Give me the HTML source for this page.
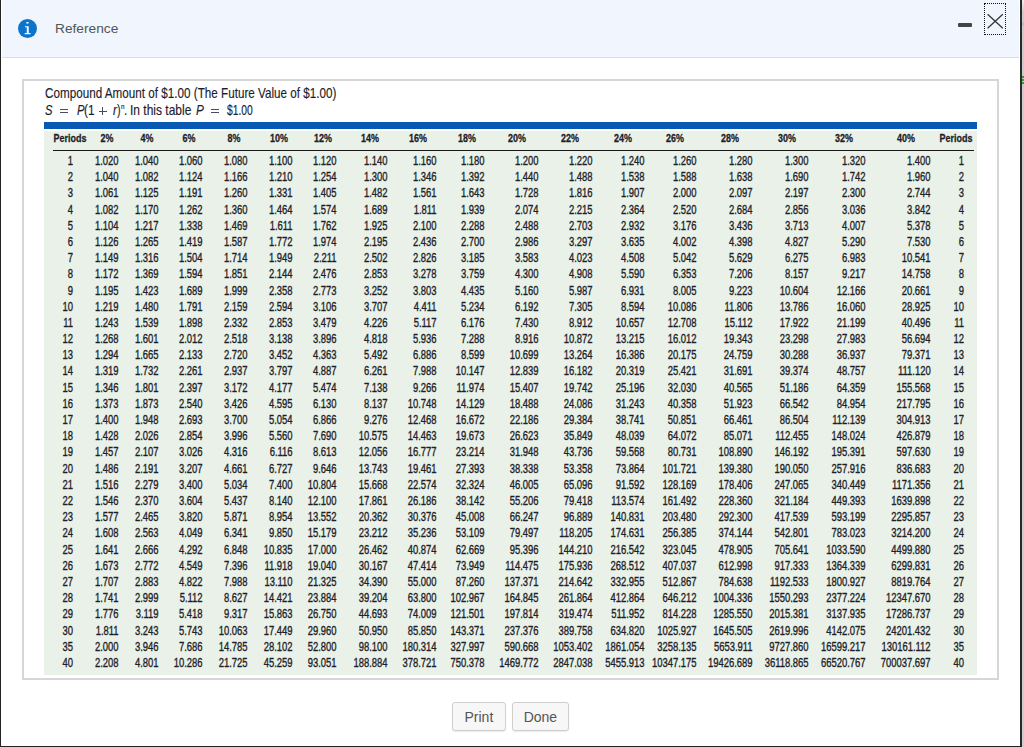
<!DOCTYPE html>
<html><head><meta charset="utf-8">
<style>
html,body{margin:0;padding:0;}
body{width:1024px;height:747px;overflow:hidden;position:relative;background:#fff;font-family:"Liberation Sans",sans-serif;}
.hdr{position:absolute;left:2px;top:0;width:1017px;height:57px;background:#f0f5fe;border-bottom:1px solid #c8e0f6;}
.lb{position:absolute;left:0;top:0;width:1px;height:747px;background:#222;}
.rb{position:absolute;left:1020px;top:0;width:2px;height:747px;background:#2a2a2a;}
.rg{position:absolute;left:1022px;top:0;width:2px;height:747px;background:linear-gradient(to bottom,#eeeeee 0px,#cccccc 12px,#cccccc 22px,#b9bac2 23px,#b9bac2 25px,#cccccc 26px);}
.gm{position:absolute;left:1022px;width:2px;background:#3a9a3a;}
.bb{position:absolute;left:0;top:746px;width:1022px;height:1px;background:#222;}
.icon{position:absolute;left:18.3px;top:18.7px;width:19.1px;height:19.1px;border-radius:50%;background:#0b74cd;}
.ref{position:absolute;left:54.8px;top:20.0px;font-size:13.2px;line-height:18px;color:#555;transform:scaleX(1.04);transform-origin:0 0;}
.minus{position:absolute;left:958.4px;top:22.7px;width:13.2px;height:4.4px;background:#444;border-radius:1px;}
.xbox{position:absolute;left:984px;top:3px;width:22px;height:31.8px;border:1px dotted #111;box-sizing:border-box;}
.panel{position:absolute;left:22.3px;top:79.2px;width:977px;height:600.8px;border:2px solid #d6d6d6;box-sizing:border-box;}
.title{position:absolute;left:44.8px;top:85.25px;font-size:14.4px;line-height:16px;color:#1c1c2c;white-space:nowrap;transform:scaleX(0.812);transform-origin:0 0;-webkit-text-stroke:0.15px #1c1c2c;}
.ln{position:absolute;background:#4a4a60;}
.fp{position:absolute;font-size:14.4px;line-height:16px;color:#1c1c2c;white-space:nowrap;transform:scaleX(0.88);transform-origin:0 0;-webkit-text-stroke:0.15px #1c1c2c;}
.bar{position:absolute;left:44px;top:122.4px;width:933px;height:6.9px;background:#0759b3;}
.tbg{position:absolute;left:44px;top:130.9px;width:933px;height:544.4px;background:#e9f1e8;}
.uline{position:absolute;left:53px;top:149.8px;width:921px;height:1.3px;background:#1a1a1a;}
.c{position:absolute;font-size:12.6px;line-height:12.6px;white-space:nowrap;color:#1e1e28;-webkit-text-stroke:0.35px #1e1e28;transform:scaleX(0.75);transform-origin:100% 0;}
.h{position:absolute;width:100px;text-align:center;font-weight:bold;font-size:11.2px;line-height:11.2px;white-space:nowrap;color:#1e1e28;-webkit-text-stroke:0.3px #1e1e28;transform:scaleX(0.8);transform-origin:50% 0;}
.btn{position:absolute;top:702.4px;height:28.4px;box-sizing:border-box;border:1px solid #cfcfcf;border-radius:3px;background:#f7f7f7;color:#555;font-size:14px;line-height:28.2px;text-align:center;box-shadow:0 1px 1px rgba(0,0,0,0.08);}
</style></head><body>
<div class="hdr"></div>
<div class="icon"><svg width="19.1" height="19.1" viewBox="0 0 19.1 19.1" style="position:absolute;left:0;top:0"><rect x="8.3" y="3.0" width="2.4" height="1.6" rx="0.6" fill="#fff"/><path d="M7.0 7.2 H10.7 V14.0 H12.5 V15.3 H6.7 V14.0 H8.8 V8.3 H7.0 Z" fill="#fff"/></svg></div>
<div class="ref">Reference</div>
<div class="minus"></div>
<div class="xbox"><svg width="21" height="30" viewBox="0 0 21 30" style="position:absolute;left:0;top:0"><path d="M2.6 10.2 L17.8 24.2 M17.8 10.2 L2.6 24.2" stroke="#333" stroke-width="1.25" fill="none"/></svg></div>
<div class="panel"></div>
<div class="title" id="title">Compound Amount of $1.00 (The Future Value of $1.00)</div>
<div class="fp" style="left:45.20px;top:101.50px;transform:scaleX(0.7817)"><i>S</i></div>
<div class="fp" style="left:76.50px;top:101.50px;transform:scaleX(0.7817)"><i>P</i></div>
<div class="fp" style="left:84.00px;top:101.50px;transform:scaleX(0.8189)">(</div>
<div class="fp" style="left:88.00px;top:101.50px;transform:scaleX(0.8189)">1</div>
<div class="fp" style="left:112.80px;top:101.50px;transform:scaleX(0.8189)"><i>r</i></div>
<div class="fp" style="left:117.20px;top:101.50px;transform:scaleX(0.7445)">)</div>
<div class="fp" style="left:123.60px;top:101.50px;transform:scaleX(0.8189)">.</div>
<div class="fp" style="left:130.20px;top:101.50px;transform:scaleX(0.8329)">In this table</div>
<div class="fp" style="left:195.80px;top:101.50px;transform:scaleX(0.8189)"><i>P</i></div>
<div class="fp" style="left:227.00px;top:101.50px;transform:scaleX(0.7166)">$1.00</div>
<div class="fp" style="left:120.5px;top:104.10px;font-size:7px;line-height:6px;transform:scaleX(0.9)">n</div>
<div class="ln" style="left:60.2px;top:109px;width:7.8px;height:1px"></div>
<div class="ln" style="left:60.2px;top:112px;width:7.8px;height:1px"></div>
<div class="ln" style="left:211.1px;top:109px;width:7.8px;height:1px"></div>
<div class="ln" style="left:211.1px;top:112px;width:7.8px;height:1px"></div>
<div class="ln" style="left:98.8px;top:110.8px;width:8px;height:1px"></div>
<div class="ln" style="left:102.4px;top:107.2px;width:1px;height:7.6px"></div>
<div class="bar"></div>
<div class="tbg"></div>
<div class="uline"></div>
<div class="h" style="left:19.50px;top:133.43px">Periods</div>
<div class="h" style="left:56.60px;top:133.43px">2%</div>
<div class="h" style="left:96.90px;top:133.43px">4%</div>
<div class="h" style="left:138.80px;top:133.43px">6%</div>
<div class="h" style="left:184.00px;top:133.43px">8%</div>
<div class="h" style="left:228.70px;top:133.43px">10%</div>
<div class="h" style="left:273.20px;top:133.43px">12%</div>
<div class="h" style="left:319.90px;top:133.43px">14%</div>
<div class="h" style="left:368.20px;top:133.43px">16%</div>
<div class="h" style="left:417.00px;top:133.43px">18%</div>
<div class="h" style="left:466.90px;top:133.43px">20%</div>
<div class="h" style="left:520.00px;top:133.43px">22%</div>
<div class="h" style="left:572.60px;top:133.43px">24%</div>
<div class="h" style="left:625.30px;top:133.43px">26%</div>
<div class="h" style="left:680.40px;top:133.43px">28%</div>
<div class="h" style="left:736.70px;top:133.43px">30%</div>
<div class="h" style="left:793.80px;top:133.43px">32%</div>
<div class="h" style="left:856.00px;top:133.43px">40%</div>
<div class="h" style="left:906.30px;top:133.43px">Periods</div>
<div class="c" style="right:951.32px;top:155.01px">1</div>
<div class="c" style="right:905.62px;top:155.01px">1.020</div>
<div class="c" style="right:865.32px;top:155.01px">1.040</div>
<div class="c" style="right:821.52px;top:155.01px">1.060</div>
<div class="c" style="right:776.62px;top:155.01px">1.080</div>
<div class="c" style="right:731.62px;top:155.01px">1.100</div>
<div class="c" style="right:687.52px;top:155.01px">1.120</div>
<div class="c" style="right:636.02px;top:155.01px">1.140</div>
<div class="c" style="right:587.42px;top:155.01px">1.160</div>
<div class="c" style="right:539.12px;top:155.01px">1.180</div>
<div class="c" style="right:485.32px;top:155.01px">1.200</div>
<div class="c" style="right:431.92px;top:155.01px">1.220</div>
<div class="c" style="right:379.32px;top:155.01px">1.240</div>
<div class="c" style="right:327.52px;top:155.01px">1.260</div>
<div class="c" style="right:271.62px;top:155.01px">1.280</div>
<div class="c" style="right:215.02px;top:155.01px">1.300</div>
<div class="c" style="right:158.32px;top:155.01px">1.320</div>
<div class="c" style="right:93.72px;top:155.01px">1.400</div>
<div class="c" style="right:59.72px;top:155.01px">1</div>
<div class="c" style="right:951.32px;top:171.20px">2</div>
<div class="c" style="right:905.62px;top:171.20px">1.040</div>
<div class="c" style="right:865.32px;top:171.20px">1.082</div>
<div class="c" style="right:821.52px;top:171.20px">1.124</div>
<div class="c" style="right:776.62px;top:171.20px">1.166</div>
<div class="c" style="right:731.62px;top:171.20px">1.210</div>
<div class="c" style="right:687.52px;top:171.20px">1.254</div>
<div class="c" style="right:636.02px;top:171.20px">1.300</div>
<div class="c" style="right:587.42px;top:171.20px">1.346</div>
<div class="c" style="right:539.12px;top:171.20px">1.392</div>
<div class="c" style="right:485.32px;top:171.20px">1.440</div>
<div class="c" style="right:431.92px;top:171.20px">1.488</div>
<div class="c" style="right:379.32px;top:171.20px">1.538</div>
<div class="c" style="right:327.52px;top:171.20px">1.588</div>
<div class="c" style="right:271.62px;top:171.20px">1.638</div>
<div class="c" style="right:215.02px;top:171.20px">1.690</div>
<div class="c" style="right:158.32px;top:171.20px">1.742</div>
<div class="c" style="right:93.72px;top:171.20px">1.960</div>
<div class="c" style="right:59.72px;top:171.20px">2</div>
<div class="c" style="right:951.32px;top:187.39px">3</div>
<div class="c" style="right:905.62px;top:187.39px">1.061</div>
<div class="c" style="right:865.32px;top:187.39px">1.125</div>
<div class="c" style="right:821.52px;top:187.39px">1.191</div>
<div class="c" style="right:776.62px;top:187.39px">1.260</div>
<div class="c" style="right:731.62px;top:187.39px">1.331</div>
<div class="c" style="right:687.52px;top:187.39px">1.405</div>
<div class="c" style="right:636.02px;top:187.39px">1.482</div>
<div class="c" style="right:587.42px;top:187.39px">1.561</div>
<div class="c" style="right:539.12px;top:187.39px">1.643</div>
<div class="c" style="right:485.32px;top:187.39px">1.728</div>
<div class="c" style="right:431.92px;top:187.39px">1.816</div>
<div class="c" style="right:379.32px;top:187.39px">1.907</div>
<div class="c" style="right:327.52px;top:187.39px">2.000</div>
<div class="c" style="right:271.62px;top:187.39px">2.097</div>
<div class="c" style="right:215.02px;top:187.39px">2.197</div>
<div class="c" style="right:158.32px;top:187.39px">2.300</div>
<div class="c" style="right:93.72px;top:187.39px">2.744</div>
<div class="c" style="right:59.72px;top:187.39px">3</div>
<div class="c" style="right:951.32px;top:203.58px">4</div>
<div class="c" style="right:905.62px;top:203.58px">1.082</div>
<div class="c" style="right:865.32px;top:203.58px">1.170</div>
<div class="c" style="right:821.52px;top:203.58px">1.262</div>
<div class="c" style="right:776.62px;top:203.58px">1.360</div>
<div class="c" style="right:731.62px;top:203.58px">1.464</div>
<div class="c" style="right:687.52px;top:203.58px">1.574</div>
<div class="c" style="right:636.02px;top:203.58px">1.689</div>
<div class="c" style="right:587.42px;top:203.58px">1.811</div>
<div class="c" style="right:539.12px;top:203.58px">1.939</div>
<div class="c" style="right:485.32px;top:203.58px">2.074</div>
<div class="c" style="right:431.92px;top:203.58px">2.215</div>
<div class="c" style="right:379.32px;top:203.58px">2.364</div>
<div class="c" style="right:327.52px;top:203.58px">2.520</div>
<div class="c" style="right:271.62px;top:203.58px">2.684</div>
<div class="c" style="right:215.02px;top:203.58px">2.856</div>
<div class="c" style="right:158.32px;top:203.58px">3.036</div>
<div class="c" style="right:93.72px;top:203.58px">3.842</div>
<div class="c" style="right:59.72px;top:203.58px">4</div>
<div class="c" style="right:951.32px;top:219.77px">5</div>
<div class="c" style="right:905.62px;top:219.77px">1.104</div>
<div class="c" style="right:865.32px;top:219.77px">1.217</div>
<div class="c" style="right:821.52px;top:219.77px">1.338</div>
<div class="c" style="right:776.62px;top:219.77px">1.469</div>
<div class="c" style="right:731.62px;top:219.77px">1.611</div>
<div class="c" style="right:687.52px;top:219.77px">1.762</div>
<div class="c" style="right:636.02px;top:219.77px">1.925</div>
<div class="c" style="right:587.42px;top:219.77px">2.100</div>
<div class="c" style="right:539.12px;top:219.77px">2.288</div>
<div class="c" style="right:485.32px;top:219.77px">2.488</div>
<div class="c" style="right:431.92px;top:219.77px">2.703</div>
<div class="c" style="right:379.32px;top:219.77px">2.932</div>
<div class="c" style="right:327.52px;top:219.77px">3.176</div>
<div class="c" style="right:271.62px;top:219.77px">3.436</div>
<div class="c" style="right:215.02px;top:219.77px">3.713</div>
<div class="c" style="right:158.32px;top:219.77px">4.007</div>
<div class="c" style="right:93.72px;top:219.77px">5.378</div>
<div class="c" style="right:59.72px;top:219.77px">5</div>
<div class="c" style="right:951.32px;top:235.96px">6</div>
<div class="c" style="right:905.62px;top:235.96px">1.126</div>
<div class="c" style="right:865.32px;top:235.96px">1.265</div>
<div class="c" style="right:821.52px;top:235.96px">1.419</div>
<div class="c" style="right:776.62px;top:235.96px">1.587</div>
<div class="c" style="right:731.62px;top:235.96px">1.772</div>
<div class="c" style="right:687.52px;top:235.96px">1.974</div>
<div class="c" style="right:636.02px;top:235.96px">2.195</div>
<div class="c" style="right:587.42px;top:235.96px">2.436</div>
<div class="c" style="right:539.12px;top:235.96px">2.700</div>
<div class="c" style="right:485.32px;top:235.96px">2.986</div>
<div class="c" style="right:431.92px;top:235.96px">3.297</div>
<div class="c" style="right:379.32px;top:235.96px">3.635</div>
<div class="c" style="right:327.52px;top:235.96px">4.002</div>
<div class="c" style="right:271.62px;top:235.96px">4.398</div>
<div class="c" style="right:215.02px;top:235.96px">4.827</div>
<div class="c" style="right:158.32px;top:235.96px">5.290</div>
<div class="c" style="right:93.72px;top:235.96px">7.530</div>
<div class="c" style="right:59.72px;top:235.96px">6</div>
<div class="c" style="right:951.32px;top:252.15px">7</div>
<div class="c" style="right:905.62px;top:252.15px">1.149</div>
<div class="c" style="right:865.32px;top:252.15px">1.316</div>
<div class="c" style="right:821.52px;top:252.15px">1.504</div>
<div class="c" style="right:776.62px;top:252.15px">1.714</div>
<div class="c" style="right:731.62px;top:252.15px">1.949</div>
<div class="c" style="right:687.52px;top:252.15px">2.211</div>
<div class="c" style="right:636.02px;top:252.15px">2.502</div>
<div class="c" style="right:587.42px;top:252.15px">2.826</div>
<div class="c" style="right:539.12px;top:252.15px">3.185</div>
<div class="c" style="right:485.32px;top:252.15px">3.583</div>
<div class="c" style="right:431.92px;top:252.15px">4.023</div>
<div class="c" style="right:379.32px;top:252.15px">4.508</div>
<div class="c" style="right:327.52px;top:252.15px">5.042</div>
<div class="c" style="right:271.62px;top:252.15px">5.629</div>
<div class="c" style="right:215.02px;top:252.15px">6.275</div>
<div class="c" style="right:158.32px;top:252.15px">6.983</div>
<div class="c" style="right:93.72px;top:252.15px">10.541</div>
<div class="c" style="right:59.72px;top:252.15px">7</div>
<div class="c" style="right:951.32px;top:268.34px">8</div>
<div class="c" style="right:905.62px;top:268.34px">1.172</div>
<div class="c" style="right:865.32px;top:268.34px">1.369</div>
<div class="c" style="right:821.52px;top:268.34px">1.594</div>
<div class="c" style="right:776.62px;top:268.34px">1.851</div>
<div class="c" style="right:731.62px;top:268.34px">2.144</div>
<div class="c" style="right:687.52px;top:268.34px">2.476</div>
<div class="c" style="right:636.02px;top:268.34px">2.853</div>
<div class="c" style="right:587.42px;top:268.34px">3.278</div>
<div class="c" style="right:539.12px;top:268.34px">3.759</div>
<div class="c" style="right:485.32px;top:268.34px">4.300</div>
<div class="c" style="right:431.92px;top:268.34px">4.908</div>
<div class="c" style="right:379.32px;top:268.34px">5.590</div>
<div class="c" style="right:327.52px;top:268.34px">6.353</div>
<div class="c" style="right:271.62px;top:268.34px">7.206</div>
<div class="c" style="right:215.02px;top:268.34px">8.157</div>
<div class="c" style="right:158.32px;top:268.34px">9.217</div>
<div class="c" style="right:93.72px;top:268.34px">14.758</div>
<div class="c" style="right:59.72px;top:268.34px">8</div>
<div class="c" style="right:951.32px;top:284.53px">9</div>
<div class="c" style="right:905.62px;top:284.53px">1.195</div>
<div class="c" style="right:865.32px;top:284.53px">1.423</div>
<div class="c" style="right:821.52px;top:284.53px">1.689</div>
<div class="c" style="right:776.62px;top:284.53px">1.999</div>
<div class="c" style="right:731.62px;top:284.53px">2.358</div>
<div class="c" style="right:687.52px;top:284.53px">2.773</div>
<div class="c" style="right:636.02px;top:284.53px">3.252</div>
<div class="c" style="right:587.42px;top:284.53px">3.803</div>
<div class="c" style="right:539.12px;top:284.53px">4.435</div>
<div class="c" style="right:485.32px;top:284.53px">5.160</div>
<div class="c" style="right:431.92px;top:284.53px">5.987</div>
<div class="c" style="right:379.32px;top:284.53px">6.931</div>
<div class="c" style="right:327.52px;top:284.53px">8.005</div>
<div class="c" style="right:271.62px;top:284.53px">9.223</div>
<div class="c" style="right:215.02px;top:284.53px">10.604</div>
<div class="c" style="right:158.32px;top:284.53px">12.166</div>
<div class="c" style="right:93.72px;top:284.53px">20.661</div>
<div class="c" style="right:59.72px;top:284.53px">9</div>
<div class="c" style="right:951.32px;top:300.72px">10</div>
<div class="c" style="right:905.62px;top:300.72px">1.219</div>
<div class="c" style="right:865.32px;top:300.72px">1.480</div>
<div class="c" style="right:821.52px;top:300.72px">1.791</div>
<div class="c" style="right:776.62px;top:300.72px">2.159</div>
<div class="c" style="right:731.62px;top:300.72px">2.594</div>
<div class="c" style="right:687.52px;top:300.72px">3.106</div>
<div class="c" style="right:636.02px;top:300.72px">3.707</div>
<div class="c" style="right:587.42px;top:300.72px">4.411</div>
<div class="c" style="right:539.12px;top:300.72px">5.234</div>
<div class="c" style="right:485.32px;top:300.72px">6.192</div>
<div class="c" style="right:431.92px;top:300.72px">7.305</div>
<div class="c" style="right:379.32px;top:300.72px">8.594</div>
<div class="c" style="right:327.52px;top:300.72px">10.086</div>
<div class="c" style="right:271.62px;top:300.72px">11.806</div>
<div class="c" style="right:215.02px;top:300.72px">13.786</div>
<div class="c" style="right:158.32px;top:300.72px">16.060</div>
<div class="c" style="right:93.72px;top:300.72px">28.925</div>
<div class="c" style="right:59.72px;top:300.72px">10</div>
<div class="c" style="right:951.32px;top:316.91px">11</div>
<div class="c" style="right:905.62px;top:316.91px">1.243</div>
<div class="c" style="right:865.32px;top:316.91px">1.539</div>
<div class="c" style="right:821.52px;top:316.91px">1.898</div>
<div class="c" style="right:776.62px;top:316.91px">2.332</div>
<div class="c" style="right:731.62px;top:316.91px">2.853</div>
<div class="c" style="right:687.52px;top:316.91px">3.479</div>
<div class="c" style="right:636.02px;top:316.91px">4.226</div>
<div class="c" style="right:587.42px;top:316.91px">5.117</div>
<div class="c" style="right:539.12px;top:316.91px">6.176</div>
<div class="c" style="right:485.32px;top:316.91px">7.430</div>
<div class="c" style="right:431.92px;top:316.91px">8.912</div>
<div class="c" style="right:379.32px;top:316.91px">10.657</div>
<div class="c" style="right:327.52px;top:316.91px">12.708</div>
<div class="c" style="right:271.62px;top:316.91px">15.112</div>
<div class="c" style="right:215.02px;top:316.91px">17.922</div>
<div class="c" style="right:158.32px;top:316.91px">21.199</div>
<div class="c" style="right:93.72px;top:316.91px">40.496</div>
<div class="c" style="right:59.72px;top:316.91px">11</div>
<div class="c" style="right:951.32px;top:333.10px">12</div>
<div class="c" style="right:905.62px;top:333.10px">1.268</div>
<div class="c" style="right:865.32px;top:333.10px">1.601</div>
<div class="c" style="right:821.52px;top:333.10px">2.012</div>
<div class="c" style="right:776.62px;top:333.10px">2.518</div>
<div class="c" style="right:731.62px;top:333.10px">3.138</div>
<div class="c" style="right:687.52px;top:333.10px">3.896</div>
<div class="c" style="right:636.02px;top:333.10px">4.818</div>
<div class="c" style="right:587.42px;top:333.10px">5.936</div>
<div class="c" style="right:539.12px;top:333.10px">7.288</div>
<div class="c" style="right:485.32px;top:333.10px">8.916</div>
<div class="c" style="right:431.92px;top:333.10px">10.872</div>
<div class="c" style="right:379.32px;top:333.10px">13.215</div>
<div class="c" style="right:327.52px;top:333.10px">16.012</div>
<div class="c" style="right:271.62px;top:333.10px">19.343</div>
<div class="c" style="right:215.02px;top:333.10px">23.298</div>
<div class="c" style="right:158.32px;top:333.10px">27.983</div>
<div class="c" style="right:93.72px;top:333.10px">56.694</div>
<div class="c" style="right:59.72px;top:333.10px">12</div>
<div class="c" style="right:951.32px;top:349.29px">13</div>
<div class="c" style="right:905.62px;top:349.29px">1.294</div>
<div class="c" style="right:865.32px;top:349.29px">1.665</div>
<div class="c" style="right:821.52px;top:349.29px">2.133</div>
<div class="c" style="right:776.62px;top:349.29px">2.720</div>
<div class="c" style="right:731.62px;top:349.29px">3.452</div>
<div class="c" style="right:687.52px;top:349.29px">4.363</div>
<div class="c" style="right:636.02px;top:349.29px">5.492</div>
<div class="c" style="right:587.42px;top:349.29px">6.886</div>
<div class="c" style="right:539.12px;top:349.29px">8.599</div>
<div class="c" style="right:485.32px;top:349.29px">10.699</div>
<div class="c" style="right:431.92px;top:349.29px">13.264</div>
<div class="c" style="right:379.32px;top:349.29px">16.386</div>
<div class="c" style="right:327.52px;top:349.29px">20.175</div>
<div class="c" style="right:271.62px;top:349.29px">24.759</div>
<div class="c" style="right:215.02px;top:349.29px">30.288</div>
<div class="c" style="right:158.32px;top:349.29px">36.937</div>
<div class="c" style="right:93.72px;top:349.29px">79.371</div>
<div class="c" style="right:59.72px;top:349.29px">13</div>
<div class="c" style="right:951.32px;top:365.48px">14</div>
<div class="c" style="right:905.62px;top:365.48px">1.319</div>
<div class="c" style="right:865.32px;top:365.48px">1.732</div>
<div class="c" style="right:821.52px;top:365.48px">2.261</div>
<div class="c" style="right:776.62px;top:365.48px">2.937</div>
<div class="c" style="right:731.62px;top:365.48px">3.797</div>
<div class="c" style="right:687.52px;top:365.48px">4.887</div>
<div class="c" style="right:636.02px;top:365.48px">6.261</div>
<div class="c" style="right:587.42px;top:365.48px">7.988</div>
<div class="c" style="right:539.12px;top:365.48px">10.147</div>
<div class="c" style="right:485.32px;top:365.48px">12.839</div>
<div class="c" style="right:431.92px;top:365.48px">16.182</div>
<div class="c" style="right:379.32px;top:365.48px">20.319</div>
<div class="c" style="right:327.52px;top:365.48px">25.421</div>
<div class="c" style="right:271.62px;top:365.48px">31.691</div>
<div class="c" style="right:215.02px;top:365.48px">39.374</div>
<div class="c" style="right:158.32px;top:365.48px">48.757</div>
<div class="c" style="right:93.72px;top:365.48px">111.120</div>
<div class="c" style="right:59.72px;top:365.48px">14</div>
<div class="c" style="right:951.32px;top:381.67px">15</div>
<div class="c" style="right:905.62px;top:381.67px">1.346</div>
<div class="c" style="right:865.32px;top:381.67px">1.801</div>
<div class="c" style="right:821.52px;top:381.67px">2.397</div>
<div class="c" style="right:776.62px;top:381.67px">3.172</div>
<div class="c" style="right:731.62px;top:381.67px">4.177</div>
<div class="c" style="right:687.52px;top:381.67px">5.474</div>
<div class="c" style="right:636.02px;top:381.67px">7.138</div>
<div class="c" style="right:587.42px;top:381.67px">9.266</div>
<div class="c" style="right:539.12px;top:381.67px">11.974</div>
<div class="c" style="right:485.32px;top:381.67px">15.407</div>
<div class="c" style="right:431.92px;top:381.67px">19.742</div>
<div class="c" style="right:379.32px;top:381.67px">25.196</div>
<div class="c" style="right:327.52px;top:381.67px">32.030</div>
<div class="c" style="right:271.62px;top:381.67px">40.565</div>
<div class="c" style="right:215.02px;top:381.67px">51.186</div>
<div class="c" style="right:158.32px;top:381.67px">64.359</div>
<div class="c" style="right:93.72px;top:381.67px">155.568</div>
<div class="c" style="right:59.72px;top:381.67px">15</div>
<div class="c" style="right:951.32px;top:397.86px">16</div>
<div class="c" style="right:905.62px;top:397.86px">1.373</div>
<div class="c" style="right:865.32px;top:397.86px">1.873</div>
<div class="c" style="right:821.52px;top:397.86px">2.540</div>
<div class="c" style="right:776.62px;top:397.86px">3.426</div>
<div class="c" style="right:731.62px;top:397.86px">4.595</div>
<div class="c" style="right:687.52px;top:397.86px">6.130</div>
<div class="c" style="right:636.02px;top:397.86px">8.137</div>
<div class="c" style="right:587.42px;top:397.86px">10.748</div>
<div class="c" style="right:539.12px;top:397.86px">14.129</div>
<div class="c" style="right:485.32px;top:397.86px">18.488</div>
<div class="c" style="right:431.92px;top:397.86px">24.086</div>
<div class="c" style="right:379.32px;top:397.86px">31.243</div>
<div class="c" style="right:327.52px;top:397.86px">40.358</div>
<div class="c" style="right:271.62px;top:397.86px">51.923</div>
<div class="c" style="right:215.02px;top:397.86px">66.542</div>
<div class="c" style="right:158.32px;top:397.86px">84.954</div>
<div class="c" style="right:93.72px;top:397.86px">217.795</div>
<div class="c" style="right:59.72px;top:397.86px">16</div>
<div class="c" style="right:951.32px;top:414.05px">17</div>
<div class="c" style="right:905.62px;top:414.05px">1.400</div>
<div class="c" style="right:865.32px;top:414.05px">1.948</div>
<div class="c" style="right:821.52px;top:414.05px">2.693</div>
<div class="c" style="right:776.62px;top:414.05px">3.700</div>
<div class="c" style="right:731.62px;top:414.05px">5.054</div>
<div class="c" style="right:687.52px;top:414.05px">6.866</div>
<div class="c" style="right:636.02px;top:414.05px">9.276</div>
<div class="c" style="right:587.42px;top:414.05px">12.468</div>
<div class="c" style="right:539.12px;top:414.05px">16.672</div>
<div class="c" style="right:485.32px;top:414.05px">22.186</div>
<div class="c" style="right:431.92px;top:414.05px">29.384</div>
<div class="c" style="right:379.32px;top:414.05px">38.741</div>
<div class="c" style="right:327.52px;top:414.05px">50.851</div>
<div class="c" style="right:271.62px;top:414.05px">66.461</div>
<div class="c" style="right:215.02px;top:414.05px">86.504</div>
<div class="c" style="right:158.32px;top:414.05px">112.139</div>
<div class="c" style="right:93.72px;top:414.05px">304.913</div>
<div class="c" style="right:59.72px;top:414.05px">17</div>
<div class="c" style="right:951.32px;top:430.24px">18</div>
<div class="c" style="right:905.62px;top:430.24px">1.428</div>
<div class="c" style="right:865.32px;top:430.24px">2.026</div>
<div class="c" style="right:821.52px;top:430.24px">2.854</div>
<div class="c" style="right:776.62px;top:430.24px">3.996</div>
<div class="c" style="right:731.62px;top:430.24px">5.560</div>
<div class="c" style="right:687.52px;top:430.24px">7.690</div>
<div class="c" style="right:636.02px;top:430.24px">10.575</div>
<div class="c" style="right:587.42px;top:430.24px">14.463</div>
<div class="c" style="right:539.12px;top:430.24px">19.673</div>
<div class="c" style="right:485.32px;top:430.24px">26.623</div>
<div class="c" style="right:431.92px;top:430.24px">35.849</div>
<div class="c" style="right:379.32px;top:430.24px">48.039</div>
<div class="c" style="right:327.52px;top:430.24px">64.072</div>
<div class="c" style="right:271.62px;top:430.24px">85.071</div>
<div class="c" style="right:215.02px;top:430.24px">112.455</div>
<div class="c" style="right:158.32px;top:430.24px">148.024</div>
<div class="c" style="right:93.72px;top:430.24px">426.879</div>
<div class="c" style="right:59.72px;top:430.24px">18</div>
<div class="c" style="right:951.32px;top:446.43px">19</div>
<div class="c" style="right:905.62px;top:446.43px">1.457</div>
<div class="c" style="right:865.32px;top:446.43px">2.107</div>
<div class="c" style="right:821.52px;top:446.43px">3.026</div>
<div class="c" style="right:776.62px;top:446.43px">4.316</div>
<div class="c" style="right:731.62px;top:446.43px">6.116</div>
<div class="c" style="right:687.52px;top:446.43px">8.613</div>
<div class="c" style="right:636.02px;top:446.43px">12.056</div>
<div class="c" style="right:587.42px;top:446.43px">16.777</div>
<div class="c" style="right:539.12px;top:446.43px">23.214</div>
<div class="c" style="right:485.32px;top:446.43px">31.948</div>
<div class="c" style="right:431.92px;top:446.43px">43.736</div>
<div class="c" style="right:379.32px;top:446.43px">59.568</div>
<div class="c" style="right:327.52px;top:446.43px">80.731</div>
<div class="c" style="right:271.62px;top:446.43px">108.890</div>
<div class="c" style="right:215.02px;top:446.43px">146.192</div>
<div class="c" style="right:158.32px;top:446.43px">195.391</div>
<div class="c" style="right:93.72px;top:446.43px">597.630</div>
<div class="c" style="right:59.72px;top:446.43px">19</div>
<div class="c" style="right:951.32px;top:462.62px">20</div>
<div class="c" style="right:905.62px;top:462.62px">1.486</div>
<div class="c" style="right:865.32px;top:462.62px">2.191</div>
<div class="c" style="right:821.52px;top:462.62px">3.207</div>
<div class="c" style="right:776.62px;top:462.62px">4.661</div>
<div class="c" style="right:731.62px;top:462.62px">6.727</div>
<div class="c" style="right:687.52px;top:462.62px">9.646</div>
<div class="c" style="right:636.02px;top:462.62px">13.743</div>
<div class="c" style="right:587.42px;top:462.62px">19.461</div>
<div class="c" style="right:539.12px;top:462.62px">27.393</div>
<div class="c" style="right:485.32px;top:462.62px">38.338</div>
<div class="c" style="right:431.92px;top:462.62px">53.358</div>
<div class="c" style="right:379.32px;top:462.62px">73.864</div>
<div class="c" style="right:327.52px;top:462.62px">101.721</div>
<div class="c" style="right:271.62px;top:462.62px">139.380</div>
<div class="c" style="right:215.02px;top:462.62px">190.050</div>
<div class="c" style="right:158.32px;top:462.62px">257.916</div>
<div class="c" style="right:93.72px;top:462.62px">836.683</div>
<div class="c" style="right:59.72px;top:462.62px">20</div>
<div class="c" style="right:951.32px;top:478.81px">21</div>
<div class="c" style="right:905.62px;top:478.81px">1.516</div>
<div class="c" style="right:865.32px;top:478.81px">2.279</div>
<div class="c" style="right:821.52px;top:478.81px">3.400</div>
<div class="c" style="right:776.62px;top:478.81px">5.034</div>
<div class="c" style="right:731.62px;top:478.81px">7.400</div>
<div class="c" style="right:687.52px;top:478.81px">10.804</div>
<div class="c" style="right:636.02px;top:478.81px">15.668</div>
<div class="c" style="right:587.42px;top:478.81px">22.574</div>
<div class="c" style="right:539.12px;top:478.81px">32.324</div>
<div class="c" style="right:485.32px;top:478.81px">46.005</div>
<div class="c" style="right:431.92px;top:478.81px">65.096</div>
<div class="c" style="right:379.32px;top:478.81px">91.592</div>
<div class="c" style="right:327.52px;top:478.81px">128.169</div>
<div class="c" style="right:271.62px;top:478.81px">178.406</div>
<div class="c" style="right:215.02px;top:478.81px">247.065</div>
<div class="c" style="right:158.32px;top:478.81px">340.449</div>
<div class="c" style="right:93.72px;top:478.81px">1171.356</div>
<div class="c" style="right:59.72px;top:478.81px">21</div>
<div class="c" style="right:951.32px;top:495.00px">22</div>
<div class="c" style="right:905.62px;top:495.00px">1.546</div>
<div class="c" style="right:865.32px;top:495.00px">2.370</div>
<div class="c" style="right:821.52px;top:495.00px">3.604</div>
<div class="c" style="right:776.62px;top:495.00px">5.437</div>
<div class="c" style="right:731.62px;top:495.00px">8.140</div>
<div class="c" style="right:687.52px;top:495.00px">12.100</div>
<div class="c" style="right:636.02px;top:495.00px">17.861</div>
<div class="c" style="right:587.42px;top:495.00px">26.186</div>
<div class="c" style="right:539.12px;top:495.00px">38.142</div>
<div class="c" style="right:485.32px;top:495.00px">55.206</div>
<div class="c" style="right:431.92px;top:495.00px">79.418</div>
<div class="c" style="right:379.32px;top:495.00px">113.574</div>
<div class="c" style="right:327.52px;top:495.00px">161.492</div>
<div class="c" style="right:271.62px;top:495.00px">228.360</div>
<div class="c" style="right:215.02px;top:495.00px">321.184</div>
<div class="c" style="right:158.32px;top:495.00px">449.393</div>
<div class="c" style="right:93.72px;top:495.00px">1639.898</div>
<div class="c" style="right:59.72px;top:495.00px">22</div>
<div class="c" style="right:951.32px;top:511.19px">23</div>
<div class="c" style="right:905.62px;top:511.19px">1.577</div>
<div class="c" style="right:865.32px;top:511.19px">2.465</div>
<div class="c" style="right:821.52px;top:511.19px">3.820</div>
<div class="c" style="right:776.62px;top:511.19px">5.871</div>
<div class="c" style="right:731.62px;top:511.19px">8.954</div>
<div class="c" style="right:687.52px;top:511.19px">13.552</div>
<div class="c" style="right:636.02px;top:511.19px">20.362</div>
<div class="c" style="right:587.42px;top:511.19px">30.376</div>
<div class="c" style="right:539.12px;top:511.19px">45.008</div>
<div class="c" style="right:485.32px;top:511.19px">66.247</div>
<div class="c" style="right:431.92px;top:511.19px">96.889</div>
<div class="c" style="right:379.32px;top:511.19px">140.831</div>
<div class="c" style="right:327.52px;top:511.19px">203.480</div>
<div class="c" style="right:271.62px;top:511.19px">292.300</div>
<div class="c" style="right:215.02px;top:511.19px">417.539</div>
<div class="c" style="right:158.32px;top:511.19px">593.199</div>
<div class="c" style="right:93.72px;top:511.19px">2295.857</div>
<div class="c" style="right:59.72px;top:511.19px">23</div>
<div class="c" style="right:951.32px;top:527.38px">24</div>
<div class="c" style="right:905.62px;top:527.38px">1.608</div>
<div class="c" style="right:865.32px;top:527.38px">2.563</div>
<div class="c" style="right:821.52px;top:527.38px">4.049</div>
<div class="c" style="right:776.62px;top:527.38px">6.341</div>
<div class="c" style="right:731.62px;top:527.38px">9.850</div>
<div class="c" style="right:687.52px;top:527.38px">15.179</div>
<div class="c" style="right:636.02px;top:527.38px">23.212</div>
<div class="c" style="right:587.42px;top:527.38px">35.236</div>
<div class="c" style="right:539.12px;top:527.38px">53.109</div>
<div class="c" style="right:485.32px;top:527.38px">79.497</div>
<div class="c" style="right:431.92px;top:527.38px">118.205</div>
<div class="c" style="right:379.32px;top:527.38px">174.631</div>
<div class="c" style="right:327.52px;top:527.38px">256.385</div>
<div class="c" style="right:271.62px;top:527.38px">374.144</div>
<div class="c" style="right:215.02px;top:527.38px">542.801</div>
<div class="c" style="right:158.32px;top:527.38px">783.023</div>
<div class="c" style="right:93.72px;top:527.38px">3214.200</div>
<div class="c" style="right:59.72px;top:527.38px">24</div>
<div class="c" style="right:951.32px;top:543.57px">25</div>
<div class="c" style="right:905.62px;top:543.57px">1.641</div>
<div class="c" style="right:865.32px;top:543.57px">2.666</div>
<div class="c" style="right:821.52px;top:543.57px">4.292</div>
<div class="c" style="right:776.62px;top:543.57px">6.848</div>
<div class="c" style="right:731.62px;top:543.57px">10.835</div>
<div class="c" style="right:687.52px;top:543.57px">17.000</div>
<div class="c" style="right:636.02px;top:543.57px">26.462</div>
<div class="c" style="right:587.42px;top:543.57px">40.874</div>
<div class="c" style="right:539.12px;top:543.57px">62.669</div>
<div class="c" style="right:485.32px;top:543.57px">95.396</div>
<div class="c" style="right:431.92px;top:543.57px">144.210</div>
<div class="c" style="right:379.32px;top:543.57px">216.542</div>
<div class="c" style="right:327.52px;top:543.57px">323.045</div>
<div class="c" style="right:271.62px;top:543.57px">478.905</div>
<div class="c" style="right:215.02px;top:543.57px">705.641</div>
<div class="c" style="right:158.32px;top:543.57px">1033.590</div>
<div class="c" style="right:93.72px;top:543.57px">4499.880</div>
<div class="c" style="right:59.72px;top:543.57px">25</div>
<div class="c" style="right:951.32px;top:559.76px">26</div>
<div class="c" style="right:905.62px;top:559.76px">1.673</div>
<div class="c" style="right:865.32px;top:559.76px">2.772</div>
<div class="c" style="right:821.52px;top:559.76px">4.549</div>
<div class="c" style="right:776.62px;top:559.76px">7.396</div>
<div class="c" style="right:731.62px;top:559.76px">11.918</div>
<div class="c" style="right:687.52px;top:559.76px">19.040</div>
<div class="c" style="right:636.02px;top:559.76px">30.167</div>
<div class="c" style="right:587.42px;top:559.76px">47.414</div>
<div class="c" style="right:539.12px;top:559.76px">73.949</div>
<div class="c" style="right:485.32px;top:559.76px">114.475</div>
<div class="c" style="right:431.92px;top:559.76px">175.936</div>
<div class="c" style="right:379.32px;top:559.76px">268.512</div>
<div class="c" style="right:327.52px;top:559.76px">407.037</div>
<div class="c" style="right:271.62px;top:559.76px">612.998</div>
<div class="c" style="right:215.02px;top:559.76px">917.333</div>
<div class="c" style="right:158.32px;top:559.76px">1364.339</div>
<div class="c" style="right:93.72px;top:559.76px">6299.831</div>
<div class="c" style="right:59.72px;top:559.76px">26</div>
<div class="c" style="right:951.32px;top:575.95px">27</div>
<div class="c" style="right:905.62px;top:575.95px">1.707</div>
<div class="c" style="right:865.32px;top:575.95px">2.883</div>
<div class="c" style="right:821.52px;top:575.95px">4.822</div>
<div class="c" style="right:776.62px;top:575.95px">7.988</div>
<div class="c" style="right:731.62px;top:575.95px">13.110</div>
<div class="c" style="right:687.52px;top:575.95px">21.325</div>
<div class="c" style="right:636.02px;top:575.95px">34.390</div>
<div class="c" style="right:587.42px;top:575.95px">55.000</div>
<div class="c" style="right:539.12px;top:575.95px">87.260</div>
<div class="c" style="right:485.32px;top:575.95px">137.371</div>
<div class="c" style="right:431.92px;top:575.95px">214.642</div>
<div class="c" style="right:379.32px;top:575.95px">332.955</div>
<div class="c" style="right:327.52px;top:575.95px">512.867</div>
<div class="c" style="right:271.62px;top:575.95px">784.638</div>
<div class="c" style="right:215.02px;top:575.95px">1192.533</div>
<div class="c" style="right:158.32px;top:575.95px">1800.927</div>
<div class="c" style="right:93.72px;top:575.95px">8819.764</div>
<div class="c" style="right:59.72px;top:575.95px">27</div>
<div class="c" style="right:951.32px;top:592.14px">28</div>
<div class="c" style="right:905.62px;top:592.14px">1.741</div>
<div class="c" style="right:865.32px;top:592.14px">2.999</div>
<div class="c" style="right:821.52px;top:592.14px">5.112</div>
<div class="c" style="right:776.62px;top:592.14px">8.627</div>
<div class="c" style="right:731.62px;top:592.14px">14.421</div>
<div class="c" style="right:687.52px;top:592.14px">23.884</div>
<div class="c" style="right:636.02px;top:592.14px">39.204</div>
<div class="c" style="right:587.42px;top:592.14px">63.800</div>
<div class="c" style="right:539.12px;top:592.14px">102.967</div>
<div class="c" style="right:485.32px;top:592.14px">164.845</div>
<div class="c" style="right:431.92px;top:592.14px">261.864</div>
<div class="c" style="right:379.32px;top:592.14px">412.864</div>
<div class="c" style="right:327.52px;top:592.14px">646.212</div>
<div class="c" style="right:271.62px;top:592.14px">1004.336</div>
<div class="c" style="right:215.02px;top:592.14px">1550.293</div>
<div class="c" style="right:158.32px;top:592.14px">2377.224</div>
<div class="c" style="right:93.72px;top:592.14px">12347.670</div>
<div class="c" style="right:59.72px;top:592.14px">28</div>
<div class="c" style="right:951.32px;top:608.33px">29</div>
<div class="c" style="right:905.62px;top:608.33px">1.776</div>
<div class="c" style="right:865.32px;top:608.33px">3.119</div>
<div class="c" style="right:821.52px;top:608.33px">5.418</div>
<div class="c" style="right:776.62px;top:608.33px">9.317</div>
<div class="c" style="right:731.62px;top:608.33px">15.863</div>
<div class="c" style="right:687.52px;top:608.33px">26.750</div>
<div class="c" style="right:636.02px;top:608.33px">44.693</div>
<div class="c" style="right:587.42px;top:608.33px">74.009</div>
<div class="c" style="right:539.12px;top:608.33px">121.501</div>
<div class="c" style="right:485.32px;top:608.33px">197.814</div>
<div class="c" style="right:431.92px;top:608.33px">319.474</div>
<div class="c" style="right:379.32px;top:608.33px">511.952</div>
<div class="c" style="right:327.52px;top:608.33px">814.228</div>
<div class="c" style="right:271.62px;top:608.33px">1285.550</div>
<div class="c" style="right:215.02px;top:608.33px">2015.381</div>
<div class="c" style="right:158.32px;top:608.33px">3137.935</div>
<div class="c" style="right:93.72px;top:608.33px">17286.737</div>
<div class="c" style="right:59.72px;top:608.33px">29</div>
<div class="c" style="right:951.32px;top:624.52px">30</div>
<div class="c" style="right:905.62px;top:624.52px">1.811</div>
<div class="c" style="right:865.32px;top:624.52px">3.243</div>
<div class="c" style="right:821.52px;top:624.52px">5.743</div>
<div class="c" style="right:776.62px;top:624.52px">10.063</div>
<div class="c" style="right:731.62px;top:624.52px">17.449</div>
<div class="c" style="right:687.52px;top:624.52px">29.960</div>
<div class="c" style="right:636.02px;top:624.52px">50.950</div>
<div class="c" style="right:587.42px;top:624.52px">85.850</div>
<div class="c" style="right:539.12px;top:624.52px">143.371</div>
<div class="c" style="right:485.32px;top:624.52px">237.376</div>
<div class="c" style="right:431.92px;top:624.52px">389.758</div>
<div class="c" style="right:379.32px;top:624.52px">634.820</div>
<div class="c" style="right:327.52px;top:624.52px">1025.927</div>
<div class="c" style="right:271.62px;top:624.52px">1645.505</div>
<div class="c" style="right:215.02px;top:624.52px">2619.996</div>
<div class="c" style="right:158.32px;top:624.52px">4142.075</div>
<div class="c" style="right:93.72px;top:624.52px">24201.432</div>
<div class="c" style="right:59.72px;top:624.52px">30</div>
<div class="c" style="right:951.32px;top:640.71px">35</div>
<div class="c" style="right:905.62px;top:640.71px">2.000</div>
<div class="c" style="right:865.32px;top:640.71px">3.946</div>
<div class="c" style="right:821.52px;top:640.71px">7.686</div>
<div class="c" style="right:776.62px;top:640.71px">14.785</div>
<div class="c" style="right:731.62px;top:640.71px">28.102</div>
<div class="c" style="right:687.52px;top:640.71px">52.800</div>
<div class="c" style="right:636.02px;top:640.71px">98.100</div>
<div class="c" style="right:587.42px;top:640.71px">180.314</div>
<div class="c" style="right:539.12px;top:640.71px">327.997</div>
<div class="c" style="right:485.32px;top:640.71px">590.668</div>
<div class="c" style="right:431.92px;top:640.71px">1053.402</div>
<div class="c" style="right:379.32px;top:640.71px">1861.054</div>
<div class="c" style="right:327.52px;top:640.71px">3258.135</div>
<div class="c" style="right:271.62px;top:640.71px">5653.911</div>
<div class="c" style="right:215.02px;top:640.71px">9727.860</div>
<div class="c" style="right:158.32px;top:640.71px">16599.217</div>
<div class="c" style="right:93.72px;top:640.71px">130161.112</div>
<div class="c" style="right:59.72px;top:640.71px">35</div>
<div class="c" style="right:951.32px;top:656.90px">40</div>
<div class="c" style="right:905.62px;top:656.90px">2.208</div>
<div class="c" style="right:865.32px;top:656.90px">4.801</div>
<div class="c" style="right:821.52px;top:656.90px">10.286</div>
<div class="c" style="right:776.62px;top:656.90px">21.725</div>
<div class="c" style="right:731.62px;top:656.90px">45.259</div>
<div class="c" style="right:687.52px;top:656.90px">93.051</div>
<div class="c" style="right:636.02px;top:656.90px">188.884</div>
<div class="c" style="right:587.42px;top:656.90px">378.721</div>
<div class="c" style="right:539.12px;top:656.90px">750.378</div>
<div class="c" style="right:485.32px;top:656.90px">1469.772</div>
<div class="c" style="right:431.92px;top:656.90px">2847.038</div>
<div class="c" style="right:379.32px;top:656.90px">5455.913</div>
<div class="c" style="right:327.52px;top:656.90px">10347.175</div>
<div class="c" style="right:271.62px;top:656.90px">19426.689</div>
<div class="c" style="right:215.02px;top:656.90px">36118.865</div>
<div class="c" style="right:158.32px;top:656.90px">66520.767</div>
<div class="c" style="right:93.72px;top:656.90px">700037.697</div>
<div class="c" style="right:59.72px;top:656.90px">40</div>
<div class="btn" style="left:452.2px;width:53.4px;">Print</div>
<div class="btn" style="left:511.9px;width:57px;">Done</div>
<div class="lb"></div><div class="rb"></div><div class="rg"></div><div class="bb"></div><div class="gm" style="top:76px;height:2px"></div><div class="gm" style="top:79px;height:2px"></div><div class="gm" style="top:82px;height:2px"></div>
</body></html>
